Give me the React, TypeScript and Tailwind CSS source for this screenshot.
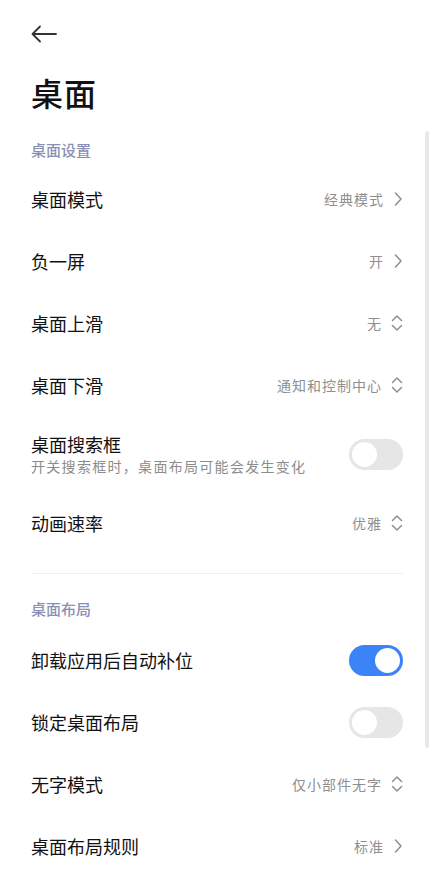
import React, { useState } from 'react';

type RowKind = 'link' | 'select' | 'toggle';

interface Row {
  title: string;
  sub?: string;
  value?: string;
  kind: RowKind;
  on?: boolean;
}

const desktopRows: Row[] = [
  { title: '桌面模式', value: '经典模式', kind: 'link' },
  { title: '负一屏', value: '开', kind: 'link' },
  { title: '桌面上滑', value: '无', kind: 'select' },
  { title: '桌面下滑', value: '通知和控制中心', kind: 'select' },
  { title: '桌面搜索框', sub: '开关搜索框时，桌面布局可能会发生变化', kind: 'toggle', on: false },
  { title: '动画速率', value: '优雅', kind: 'select' },
];

const layoutRows: Row[] = [
  { title: '卸载应用后自动补位', kind: 'toggle', on: true },
  { title: '锁定桌面布局', kind: 'toggle', on: false },
  { title: '无字模式', value: '仅小部件无字', kind: 'select' },
  { title: '桌面布局规则', value: '标准', kind: 'link' },
];

const ChevronRight = () => (
  <svg width="10" height="16" viewBox="0 0 10 16" fill="none">
    <path d="M2.5 2L8 8l-5.5 6" stroke="#8f8f8f" strokeWidth="1.5" strokeLinecap="round" strokeLinejoin="round" />
  </svg>
);

const ChevronUpDown = () => (
  <svg width="12" height="18" viewBox="0 0 12 18" fill="none">
    <path d="M1.5 6.5L6 2l4.5 4.5M1.5 11.5L6 16l4.5-4.5" stroke="#8f8f8f" strokeWidth="1.5" strokeLinecap="round" strokeLinejoin="round" />
  </svg>
);

const Toggle: React.FC<{ initial: boolean }> = ({ initial }) => {
  const [on, setOn] = useState(initial);
  return (
    <button
      onClick={() => setOn(!on)}
      className={`flex h-[31px] w-[54px] shrink-0 items-center rounded-full px-[3px] ${
        on ? 'justify-end bg-[#3a84f8]' : 'justify-start bg-[#e6e6e6]'
      }`}
    >
      <span className="h-[25px] w-[25px] rounded-full bg-white" />
    </button>
  );
};

const SettingRow: React.FC<{ row: Row }> = ({ row }) => (
  <div className={`flex items-center justify-between ${row.sub ? 'h-[76px]' : 'h-[62px]'}`}>
    <div className="flex flex-col">
      <span className="text-[18px] leading-[24px] text-[#111]">{row.title}</span>
      {row.sub && (
        <span className="text-[14px] leading-[20px] tracking-[1.3px] text-[#8c8c8c]">{row.sub}</span>
      )}
    </div>
    {row.kind === 'toggle' ? (
      <Toggle initial={!!row.on} />
    ) : (
      <div className="flex items-center gap-[9px]">
        <span className="text-[14px] tracking-[1px] text-[#8f8f8f]">{row.value}</span>
        {row.kind === 'link' ? <ChevronRight /> : <ChevronUpDown />}
      </div>
    )}
  </div>
);

const App: React.FC = () => {
  return (
    <div
      className="relative min-h-[893px] w-full bg-white pl-[31px] pr-[29px]"
      style={{ fontFamily: '"Noto Sans CJK SC", "Noto Sans", sans-serif' }}
    >
      {/* Top bar */}
      <div className="flex h-[67px] items-center">
        <svg width="26" height="18" viewBox="0 0 26 18" fill="none">
          <path d="M25 9H1.5M9 1.5L1.5 9L9 16.5" stroke="#333" strokeWidth="1.8" strokeLinecap="round" strokeLinejoin="round" />
        </svg>
      </div>

      <h1 className="mt-[5px] text-[32px] font-medium leading-[40px] tracking-[1px] text-[#111]">桌面</h1>

      {/* 桌面设置 */}
      <div className="mt-[28px] text-[15px] font-medium leading-[20px] text-[#8a90b4]">桌面设置</div>
      <div className="mt-[8px]">
        {desktopRows.map((r) => (
          <SettingRow key={r.title} row={r} />
        ))}
      </div>

      <div className="mt-[19px] h-px bg-[#eeeeee]" />

      {/* 桌面布局 */}
      <div className="mt-[25px] text-[15px] font-medium leading-[20px] text-[#8a90b4]">桌面布局</div>
      <div className="mt-[10px]">
        {layoutRows.map((r) => (
          <SettingRow key={r.title} row={r} />
        ))}
      </div>

      {/* scroll indicator */}
      <div className="absolute right-[3px] top-[131px] h-[617px] w-[4px] rounded-full bg-[#e8e8e8]" />
    </div>
  );
};

export default App;
